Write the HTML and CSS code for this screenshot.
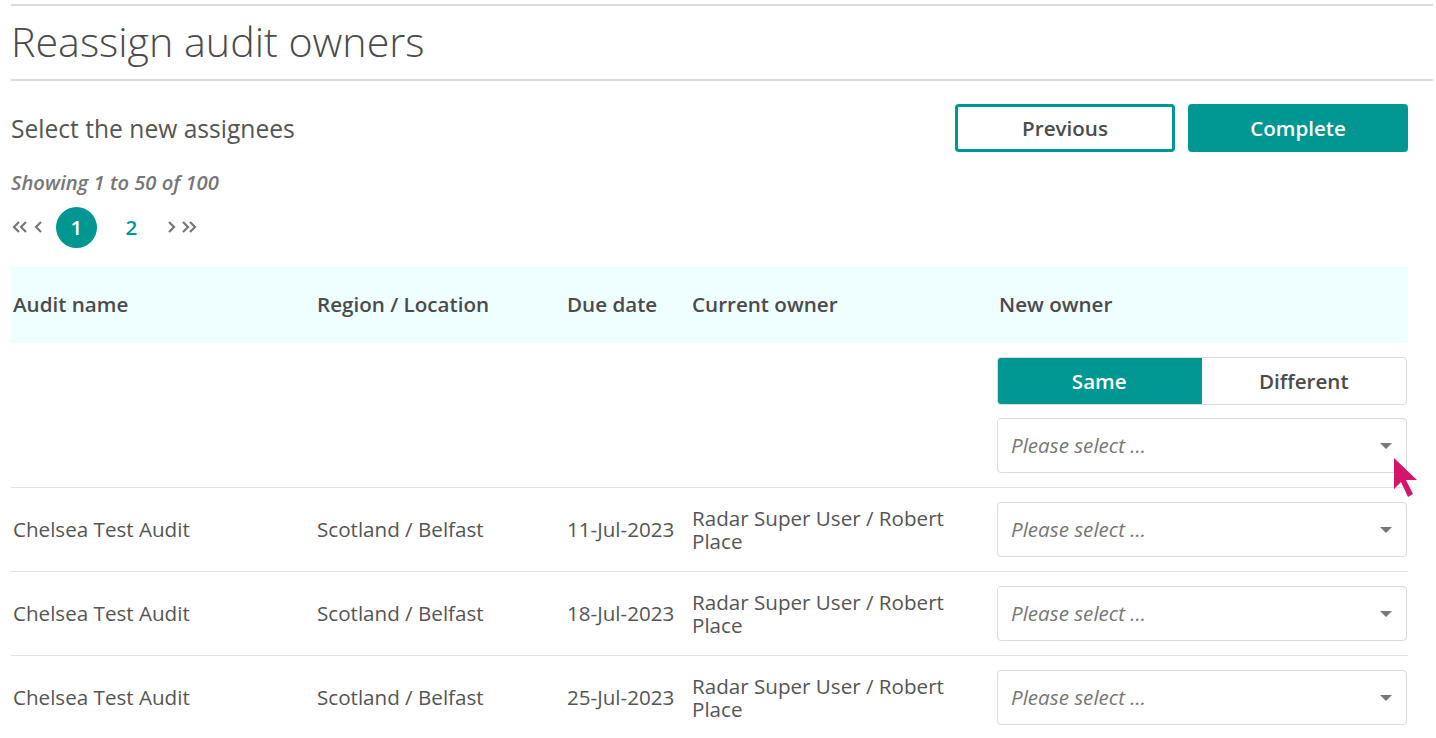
FILE: index.html
```html
<!DOCTYPE html>
<html lang="en">
<head>
    <meta charset="UTF-8">
    <meta name="viewport" content="width=device-width, initial-scale=1.0">
    <title>Reassign audit owners</title>
    <link rel="stylesheet" href="styles.css">
</head>
<body>

    <div class="page">
        <h1 class="page-title">Reassign audit owners</h1>

        <!-- Cabeçalho da etapa -->
        <div class="step-bar">
            <h2>Select the new assignees</h2>
            <div class="actions">
                <button class="btn btn-outline">Previous</button>
                <button class="btn btn-solid">Complete</button>
            </div>
        </div>

        <p class="showing">Showing 1 to 50 of 100</p>

        <div class="pager">
            <svg class="arrow first" width="17" height="14" viewBox="0 0 17 14"><path d="M8 2 L3 7 L8 12 M15 2 L10 7 L15 12"/></svg>
            <svg class="arrow prev" width="10" height="14" viewBox="0 0 10 14"><path d="M7 2 L2 7 L7 12"/></svg>
            <span class="page-num active">1</span>
            <span class="page-num">2</span>
            <svg class="arrow next" width="10" height="14" viewBox="0 0 10 14"><path d="M3 2 L8 7 L3 12"/></svg>
            <svg class="arrow last" width="17" height="14" viewBox="0 0 17 14"><path d="M2 2 L7 7 L2 12 M9 2 L14 7 L9 12"/></svg>
        </div>

        <!-- Tabela de auditorias -->
        <table class="audits">
            <colgroup>
                <col style="width:304px">
                <col style="width:250px">
                <col style="width:125px">
                <col style="width:307px">
                <col style="width:411px">
            </colgroup>
            <thead>
                <tr>
                    <th>Audit name</th>
                    <th>Region / Location</th>
                    <th>Due date</th>
                    <th>Current owner</th>
                    <th>New owner</th>
                </tr>
            </thead>
            <tbody>
                <tr class="bulk-row">
                    <td></td>
                    <td></td>
                    <td></td>
                    <td></td>
                    <td>
                        <div class="toggle">
                            <span class="on">Same</span>
                            <span>Different</span>
                        </div>
                        <div class="select select-bulk">
                            <span>Please select ...</span>
                            <span class="caret"></span>
                            <svg class="cursor" width="26" height="42" viewBox="0 0 26 42">
                                <path d="M1 1 L1 32 L8 25 L15 40 L20 37 L13 23 L24 23 Z" fill="#d4156a"/>
                            </svg>
                        </div>
                    </td>
                </tr>
                <tr>
                    <td>Chelsea Test Audit</td>
                    <td>Scotland / Belfast</td>
                    <td>11-Jul-2023</td>
                    <td class="owner">Radar Super User / Robert Place</td>
                    <td><div class="select"><span>Please select ...</span><span class="caret"></span></div></td>
                </tr>
                <tr>
                    <td>Chelsea Test Audit</td>
                    <td>Scotland / Belfast</td>
                    <td>18-Jul-2023</td>
                    <td class="owner">Radar Super User / Robert Place</td>
                    <td><div class="select"><span>Please select ...</span><span class="caret"></span></div></td>
                </tr>
                <tr>
                    <td>Chelsea Test Audit</td>
                    <td>Scotland / Belfast</td>
                    <td>25-Jul-2023</td>
                    <td class="owner">Radar Super User / Robert Place</td>
                    <td><div class="select"><span>Please select ...</span><span class="caret"></span></div></td>
                </tr>
            </tbody>
        </table>
    </div>

</body>
</html>
```

FILE: styles.css
```css
/* Geral */
* {
    box-sizing: border-box;
    margin: 0;
    padding: 0;
    font-family: 'Open Sans', sans-serif;
}

body {
    background: #ffffff;
    color: #555;
    overflow: hidden;
}

.page {
    padding: 4px 3px 0 11px;
}

/* Título */
.page-title {
    border-top: 2px solid #dcdcdc;
    border-bottom: 2px solid #dcdcdc;
    font-size: 41.2px;
    font-weight: 300;
    color: #4b4b4b;
    line-height: 70px;
    height: 77px;
}

/* Barra com botões */
.step-bar {
    display: flex;
    justify-content: space-between;
    align-items: center;
    width: 1397px;
    margin-top: 23px;
}

.step-bar h2 {
    font-size: 24.6px;
    font-weight: 400;
    color: #555;
}

.actions {
    display: flex;
    gap: 13px;
}

.btn {
    width: 220px;
    height: 48px;
    border-radius: 4px;
    font-size: 20.6px;
    font-weight: 600;
    cursor: pointer;
}

.btn-outline {
    background: #fff;
    border: 3px solid #009691;
    color: #4b4b4b;
}

.btn-solid {
    background: #009691;
    border: none;
    color: #fff;
}

.showing {
    font-size: 20.2px;
    font-style: italic;
    font-weight: 600;
    color: #777;
    margin-top: 16px;
}

/* Paginação */
.pager {
    display: flex;
    align-items: center;
    height: 42px;
    margin-top: 10px;
}

.pager .arrow path {
    fill: none;
    stroke: #777;
    stroke-width: 2.2;
}

.pager .first {
    margin-right: 6px;
}

.pager .prev {
    margin-right: 12px;
}

.pager .next {
    margin-right: 5px;
}

.page-num {
    width: 41px;
    height: 41px;
    border-radius: 50%;
    display: flex;
    align-items: center;
    justify-content: center;
    font-size: 20.6px;
    font-weight: 600;
    color: #009691;
    margin-right: 14px;
}

.page-num.active {
    background: #009691;
    color: #fff;
}

/* Tabela */
.audits {
    width: 1397px;
    border-collapse: collapse;
    table-layout: fixed;
    margin-top: 19px;
}

.audits th {
    background: #efffff;
    height: 76px;
    text-align: left;
    font-size: 20.6px;
    font-weight: 600;
    color: #4b4b4b;
    padding: 0 0 2px 2px;
}

.audits td {
    font-size: 20.6px;
    color: #555;
    padding: 14px 1px 14px 2px;
    border-bottom: 1px solid #e2e2e2;
    vertical-align: middle;
    line-height: 23px;
}

.audits td.owner {
    padding-right: 30px;
}

.audits td:last-child {
    padding-left: 0;
}

.bulk-row td {
    vertical-align: top;
}

/* Seletor Same / Different */
.toggle {
    display: flex;
    height: 48px;
    border: 1px solid #dcdcdc;
    border-radius: 4px;
    overflow: hidden;
    margin-bottom: 13px;
}

.toggle span {
    flex: 1;
    display: flex;
    align-items: center;
    justify-content: center;
    font-size: 20.6px;
    font-weight: 600;
    color: #4b4b4b;
}

.toggle span.on {
    background: #009691;
    color: #fff;
    margin: -1px 0 -1px -1px;
}

/* Campo de seleção */
.select {
    position: relative;
    height: 55px;
    border: 1px solid #dcdcdc;
    border-radius: 4px;
    display: flex;
    align-items: center;
    justify-content: space-between;
    padding: 0 14px 0 13px;
}

.select span {
    font-size: 20.6px;
    font-style: italic;
    color: #777;
}

.select .caret {
    width: 0;
    height: 0;
    border-left: 6px solid transparent;
    border-right: 6px solid transparent;
    border-top: 6px solid #777;
}

.cursor {
    position: absolute;
    right: -13px;
    top: 38px;
}
```
